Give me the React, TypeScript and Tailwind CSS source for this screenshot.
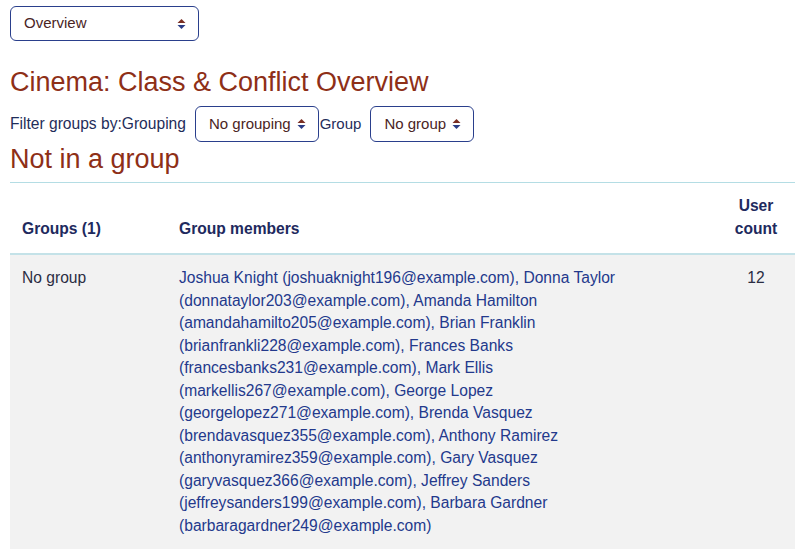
const members = [
  ["Joshua Knight", "joshuaknight196@example.com"],
  ["Donna Taylor", "donnataylor203@example.com"],
  ["Amanda Hamilton", "amandahamilto205@example.com"],
  ["Brian Franklin", "brianfrankli228@example.com"],
  ["Frances Banks", "francesbanks231@example.com"],
  ["Mark Ellis", "markellis267@example.com"],
  ["George Lopez", "georgelopez271@example.com"],
  ["Brenda Vasquez", "brendavasquez355@example.com"],
  ["Anthony Ramirez", "anthonyramirez359@example.com"],
  ["Gary Vasquez", "garyvasquez366@example.com"],
  ["Jeffrey Sanders", "jeffreysanders199@example.com"],
  ["Barbara Gardner", "barbaragardner249@example.com"],
]

function Arrows() {
  return (
    <svg width="9" height="12" viewBox="0 0 9 12" className="shrink-0">
      <path d="M4.5 1 L8.5 5 H0.5 Z" fill="#7a2e22" />
      <path d="M4.5 11 L8.5 7 H0.5 Z" fill="#2b3d86" />
    </svg>
  )
}

function Select({ label, className = "" }: { label: string; className?: string }) {
  return (
    <div
      className={`flex items-center justify-between gap-[6px] h-9 pl-[13px] pr-[12px] border border-[#2a3f8c] rounded-md text-[15px] text-[#4a2424] bg-white ${className}`}
    >
      <span>{label}</span>
      <Arrows />
    </div>
  )
}

export default function App() {
  return (
    <div className="min-h-[555px] bg-white px-[10px] pt-[6px] font-['Liberation_Sans',Arial,sans-serif] text-[15.6px] leading-[22.5px]">
      <Select label="Overview" className="w-[189px] h-[35px]" />

      <h2 className="mt-[25px] text-[27px] leading-[32px] text-[#8e2f17]">
        Cinema: Class &amp; Conflict Overview
      </h2>

      <div className="mt-[8px] flex items-center text-[#1f2d5a]">
        <span className="mr-[9px]">Filter groups by:Grouping</span>
        <Select label="No grouping" />
        <span className="ml-px mr-[9px] text-[15px]">Group</span>
        <Select label="No group" />
      </div>

      <h3 className="mt-[1px] text-[27px] leading-[32px] text-[#8e2f17]">Not in a group</h3>

      <table className="mt-[7px] w-[785px] border-collapse">
        <thead>
          <tr className="border-t border-[#b4dde4] border-b-2 border-b-[#c4e2e8]">
            <th className="w-[157px] px-3 pt-3 pb-[13px] text-left align-bottom font-bold text-[#1e2a5e]">Groups (1)</th>
            <th className="px-3 pt-3 pb-[13px] text-left align-bottom font-bold text-[#1e2a5e]">Group members</th>
            <th className="w-[78px] px-3 pt-3 pb-[13px] text-center align-bottom font-bold text-[#1e2a5e]">
              User count
            </th>
          </tr>
        </thead>
        <tbody>
          <tr className="bg-[#f2f2f2]">
            <td className="px-3 py-3 align-top text-[#2b2d42]">No group</td>
            <td className="px-3 py-3 align-top text-[#23398c]">
              <div className="max-w-[460px]">
                {members.map(([name, email], i) => (
                  <span key={email}>
                    {name} ({email}){i < members.length - 1 ? ", " : ""}
                  </span>
                ))}
              </div>
            </td>
            <td className="px-3 py-3 align-top text-center text-[#2b2d42]">12</td>
          </tr>
        </tbody>
      </table>
    </div>
  )
}
